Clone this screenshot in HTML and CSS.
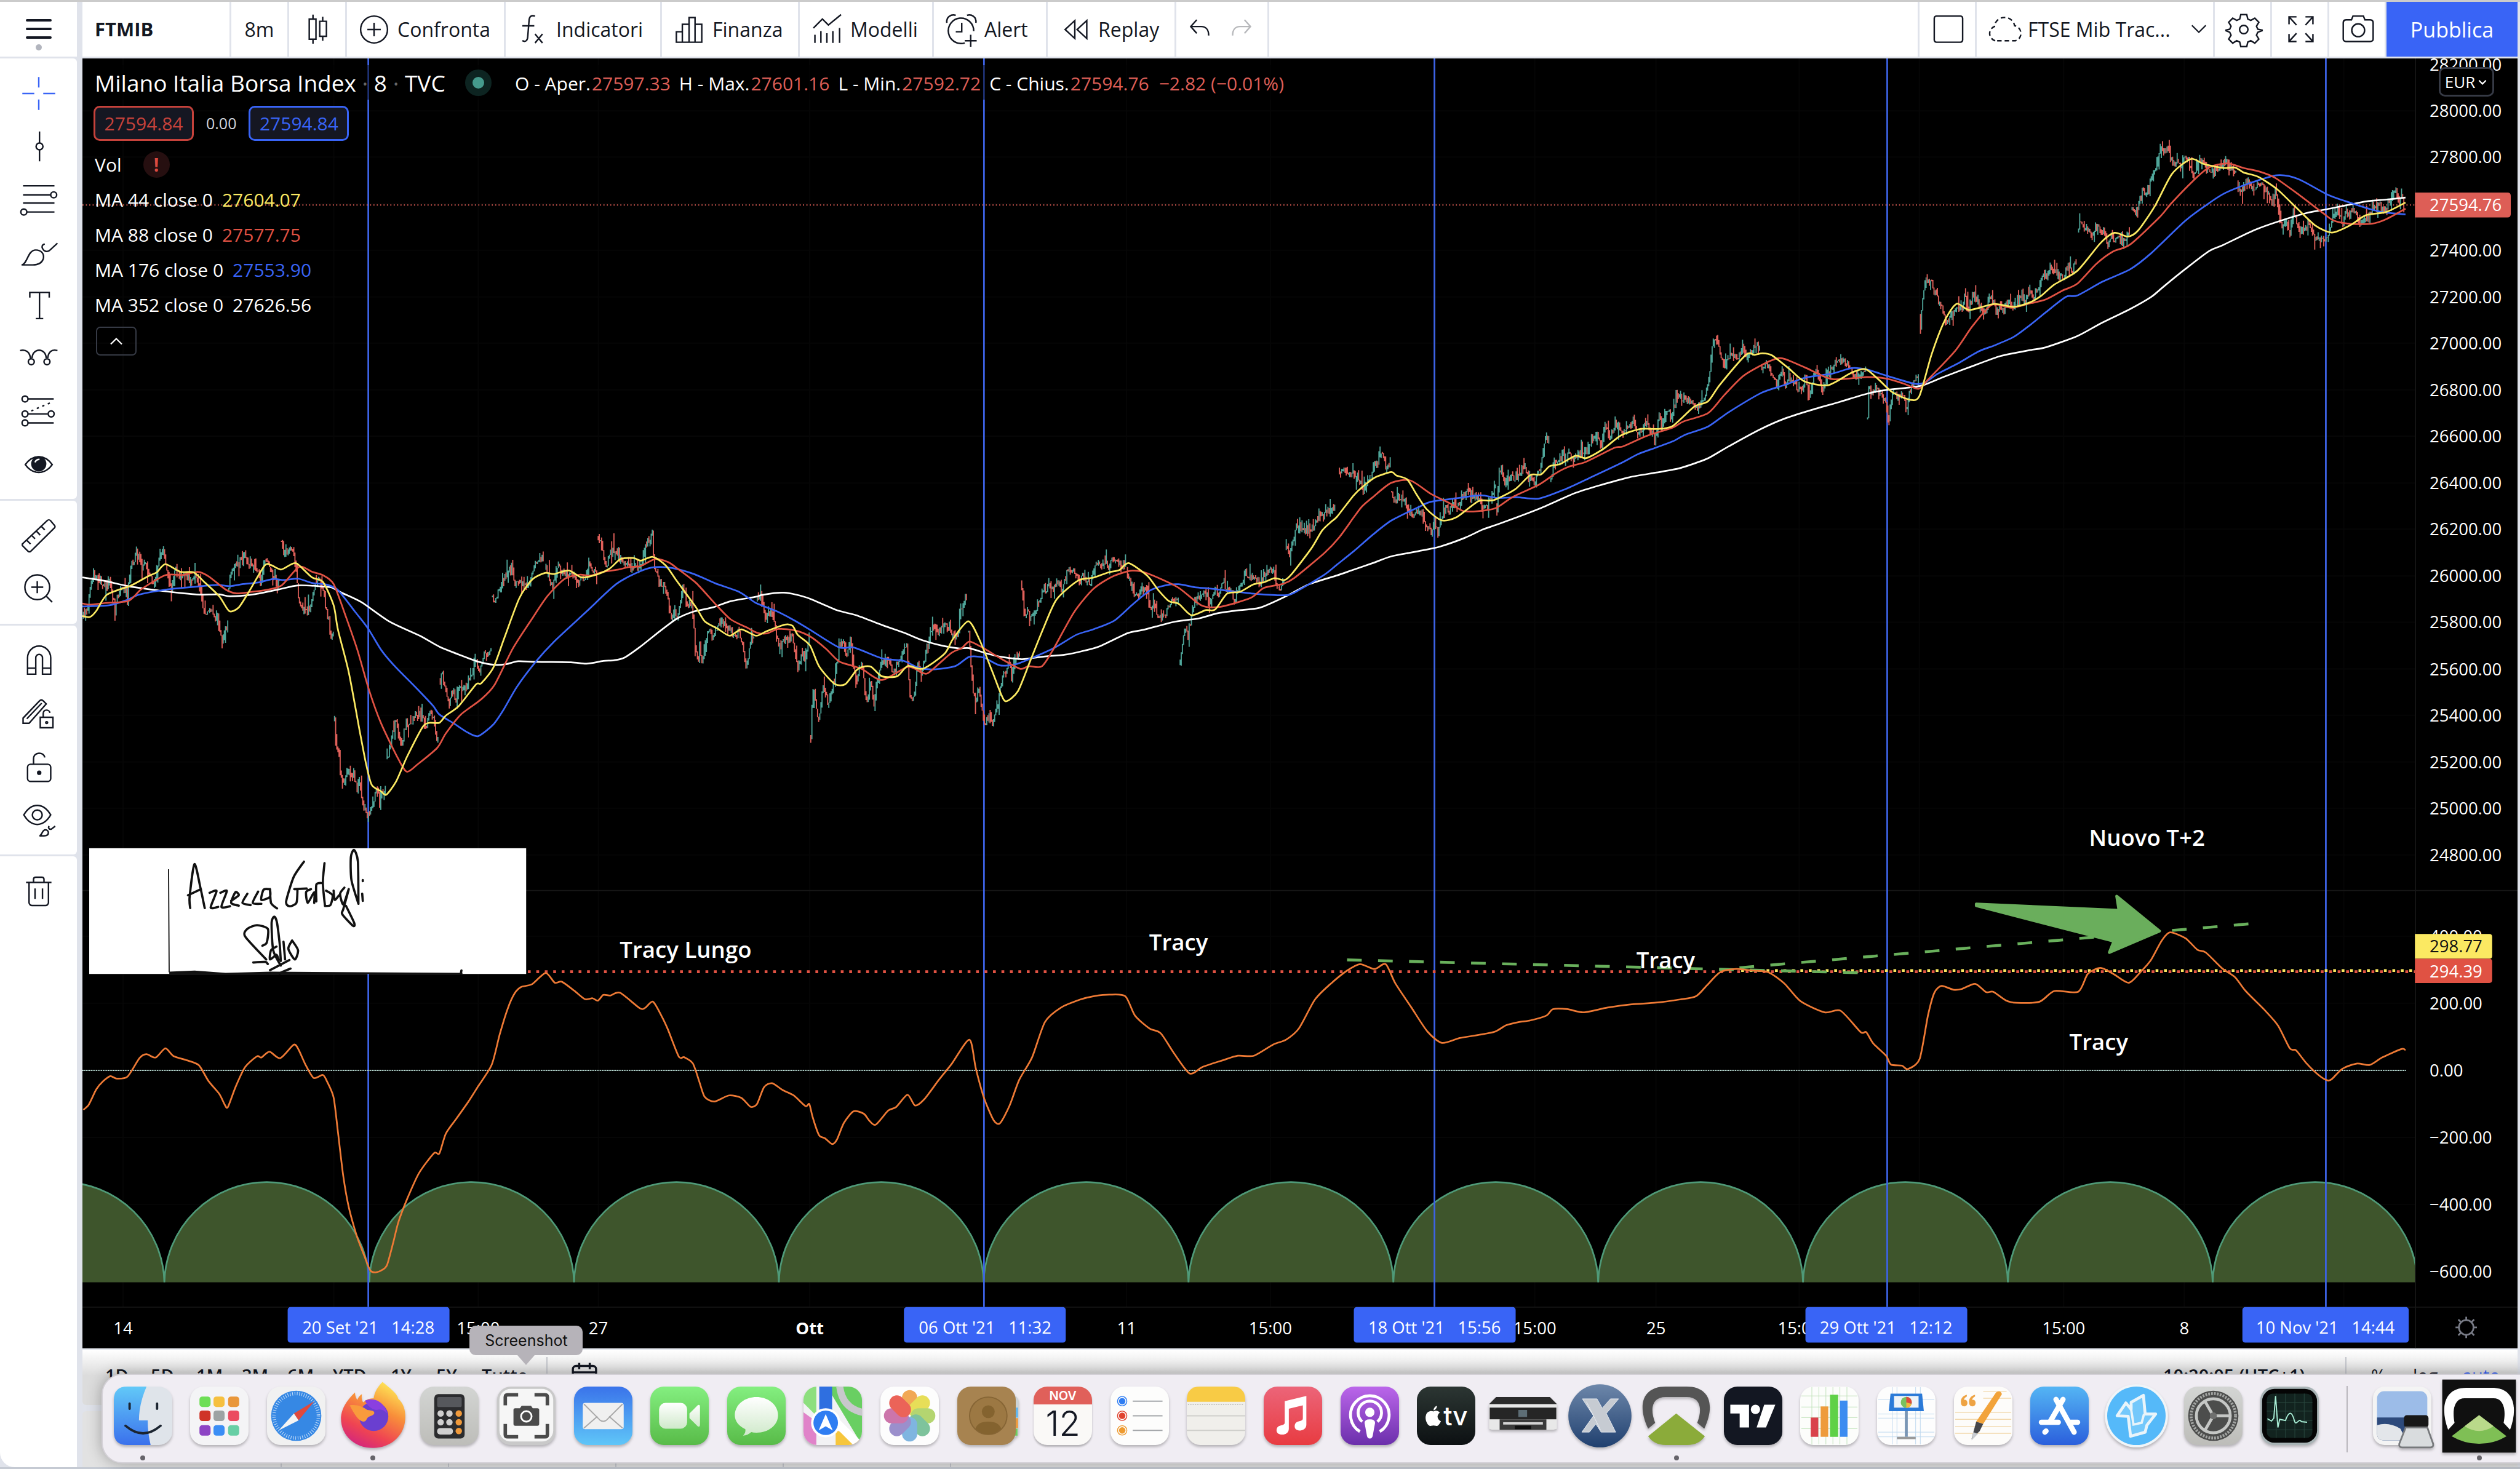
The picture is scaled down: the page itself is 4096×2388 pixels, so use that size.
FILE: index.html
```html
<!DOCTYPE html>
<html lang="it">
<head>
<meta charset="utf-8">
<title>FTMIB</title>
<link rel="stylesheet" href="styles.css">
</head>
<body>
<div class="app">
<header class="topbar">
  <button class="menu" aria-label="Menu"><svg class="menu-icon" viewBox="0 0 48 68"><path d="M5 19h38M5 33h38M5 47h38" stroke="#131722" stroke-width="4" stroke-linecap="round"/><circle cx="24" cy="63" r="5" fill="#b2b5be"/></svg></button>
  <div class="tools">
    <button class="tb w-symbol"><b>FTMIB</b></button>
    <button class="tb w-small">8m</button>
    <button class="tb w-small" aria-label="Candele"><svg class="ico" viewBox="0 0 28 28"><path d="M11 4v3M11 20.500v3M8.500 7h4.500v13.500H8.500zM17.500 5.500v3M17.500 18.500v3M15.500 8.500H20v10h-4.500z"/></svg></button>
    <button class="tb w-confronta"><svg class="ico" viewBox="0 0 28 28"><circle cx="14" cy="14" r="9"/><path d="M14 9.500v9M9.500 14h9"/></svg>Confronta</button>
    <button class="tb w-indicatori"><svg class="ico" viewBox="0 0 28 28"><path d="M15.500 5c-2.500-.8-3.800.2-4 3l-.9 11c-.2 2.500-1.500 3.500-3.600 2.500M7 11.500h8M15.500 17l5 6M20.500 17l-5 6"/></svg>Indicatori</button>
    <button class="tb w-finanza"><svg class="ico" viewBox="0 0 28 28"><path d="M5 22.500h18M5.500 22.500v-7h4v7M9.500 15.500v-5h4.500v12M14 12V6h4v16.500M18 10.500h4.500v12"/></svg>Finanza</button>
    <button class="tb w-modelli"><svg class="ico" viewBox="0 0 28 28"><path d="M5 13l6-6 4 4 8.500-7M6 17.500V23M10 15v8M14 16.500V23M18 15v8M22.500 13v10"/></svg>Modelli</button>
    <button class="tb w-alert"><svg class="ico" viewBox="0 0 28 28"><path d="M22.500 15a8.500 8.500 0 1 0-6 8M14.500 9.500v6h-4M4.500 9.500c-.5-4 3-6 6-5M24 9.500c.5-4-3-6-6-5M20.500 17.500v8M16.500 21.500h8"/></svg>Alert</button>
    <button class="tb w-replay"><svg class="ico" viewBox="0 0 28 28"><path d="M14 8v12l-6.500-6zM22 8v12l-6.500-6z"/></svg>Replay</button>
    <div class="tb w-undo"><button class="plain" aria-label="Annulla"><svg class="ico" viewBox="0 0 28 28"><path d="M12 7.500L8 12l4 4.500M8 12h7c3 0 5 2 5 6"/></svg></button><button class="plain dim" aria-label="Ripeti"><svg class="ico" viewBox="0 0 28 28"><path d="M16 7.500l4 4.500-4 4.500M20 12h-7c-3 0-5 2-5 6"/></svg></button></div>
    <div class="grow"></div>
    <button class="tb w-icon first" aria-label="Layout"><svg class="ico" viewBox="0 0 28 28"><rect x="4.500" y="5" width="19" height="17.500" rx="1.500"/></svg></button>
    <button class="tb w-layout"><svg class="ico" viewBox="0 0 28 28"><path stroke-dasharray="3 2" d="M7 21.500a5 5 0 0 1-.5-9.500C7 4.500 18.500 3.500 20 11.500c5.500 1 5.500 9 .5 10z"/></svg>FTSE Mib Trac...<svg class="chev" viewBox="0 0 16 16"><path d="M3 5l5 5 5-5"/></svg></button>
    <button class="tb w-icon" aria-label="Impostazioni"><svg class="ico" viewBox="0 0 28 28"><path d="M12 4h4l.7 3 2 .9 2.700-1.500 2.700 2.700-1.600 2.700.9 2 2.900.6v.4l-2.900 1-.9 2 1.600 2.600-2.700 2.700-2.700-1.600-2 .9-.7 3h-4l-.7-3-2-.9-2.700 1.600L3.900 20.400l1.600-2.600-.9-2-2.500-1 0-.4 2.500-.6.900-2L3.900 9.100l2.700-2.700 2.700 1.500 2-.9z"/><circle cx="14" cy="14" r="2.800"/></svg></button>
    <button class="tb w-icon" aria-label="Schermo intero"><svg class="ico" viewBox="0 0 28 28"><path d="M6 10.500V5.500h5M6 5.500l5 5.500M22 10.500V5.500h-5M22 5.500L17 11M6 17v5h5M6 22l5-5.500M22 17v5h-5M22 22l-5-5.500"/></svg></button>
    <button class="tb w-icon" aria-label="Istantanea"><svg class="ico" viewBox="0 0 28 28"><path d="M4 9.500C4 8 5 7.500 6 7.500h3.500l1-2.500h7l1 2.500H22c1 0 2 .5 2 2v11c0 1-1 1.500-2 1.500H6c-1 0-2-.5-2-1.500z"/><circle cx="14" cy="14.500" r="4.300"/></svg></button>
    <button class="publish">Pubblica</button>
  </div>
</header>

<nav class="sidebar" aria-label="Strumenti di disegno">
  <div class="group">
    <button class="tool active" aria-label="Mirino"><svg viewBox="0 0 28 28"><path d="M14 3v7M14 18v7M3 14h8M17 14h8"/></svg></button>
    <button class="tool" aria-label="Linea"><svg viewBox="0 0 28 28"><path d="M14.500 4v7.500M14.500 16.500V24"/><circle cx="14.500" cy="14" r="2.300"/></svg></button>
    <button class="tool" aria-label="Fibonacci"><svg viewBox="0 0 28 28"><path d="M3.500 5h21M3.500 11h18.500M3.500 16.500h21M6 22.500h18.500"/><circle cx="24" cy="11" r="2"/><circle cx="4" cy="22.500" r="2"/></svg></button>
    <button class="tool" aria-label="Pennello"><svg viewBox="0 0 28 28"><path d="M2.500 22.500c4-.5 4-10 9.500-10 3.500 0 6 2.500 5 6-1 3-4 4-7 4zM18 8.500c-2 .5-2 2-1.500 3 1 2 3 2.500 4.500 1.500l5.500-5"/></svg></button>
    <button class="tool" aria-label="Testo"><svg viewBox="0 0 28 28"><path d="M8 9V5.500h13V9M14.500 5.500V23M12 23h5"/></svg></button>
    <button class="tool" aria-label="Modelli"><svg viewBox="0 0 28 28"><path d="M1.500 9c4-1 6.500 1 7 5.500M9.500 14C10 7 18.500 7 19 14M20 14c.5-4.500 3-6 6.500-5"/><circle cx="9" cy="16.500" r="2"/><circle cx="19.500" cy="16.500" r="2"/></svg></button>
    <button class="tool" aria-label="Previsione"><svg viewBox="0 0 28 28"><path d="M7 6h17M7 16h13M7 22h17"/><path stroke-dasharray="1.500 2.500" d="M9 14L23 8"/><circle cx="4.800" cy="6" r="2"/><circle cx="4.800" cy="16" r="2"/><circle cx="4.800" cy="22" r="2"/><circle cx="22.300" cy="16" r="2"/></svg></button>
    <button class="tool" aria-label="Icone"><svg viewBox="0 0 28 28"><path d="M5 14.500c5-7 13-7 18 0-5 7-13 7-18 0z"/><circle cx="14" cy="14" r="4.600" fill="#131722"/><path d="M11.500 13c.5-1.500 1.500-2 3-2" stroke="#fff"/></svg></button>
  </div>
  <div class="group">
    <button class="tool" aria-label="Misura"><svg viewBox="0 0 28 28"><path d="M3 19.500L19.500 4c1-1 1.500-1 2.500 0l2.500 3c.6.7.6 1 0 1.700L9 24c-1 1-1.500 1-2.500 0L3 20.500zM6 17l2.500 2.500M9.500 14l2 2M12.500 11l2.500 2.500M16 8l2 2"/></svg></button>
    <button class="tool" aria-label="Zoom"><svg viewBox="0 0 28 28"><circle cx="13" cy="13" r="8.300"/><path d="M13 9v8M9 13h8M19 19l4 4"/></svg></button>
  </div>
  <div class="group">
    <button class="tool" aria-label="Calamita"><svg viewBox="0 0 28 28"><path d="M6.500 23V12a7.500 7.500 0 0 1 15.500 0v11h-5.500V12a2.200 2.200 0 0 0-4.500 0v11zM6.500 19H12M16.500 19H22"/></svg></button>
    <button class="tool" aria-label="Blocca disegno"><svg viewBox="0 0 28 28"><path d="M3.500 20.500v-3.500L14.500 5.500c1-1 2-.5 2.500 0L19 7.500 7.500 20.500zM6 17.500L16 7M15 16.500h8.500v7H15zM17 16.500V14c0-3 4-3 4.500-.5"/><circle cx="19.300" cy="20" r=".6"/></svg></button>
    <button class="tool" aria-label="Blocca"><svg viewBox="0 0 28 28"><rect x="6.500" y="12.500" width="15.500" height="11.500" rx="2"/><path d="M10.500 12.500V9c0-5 7-5 7.500-1"/><circle cx="14.300" cy="18.200" r="1" fill="#131722"/></svg></button>
    <button class="tool" aria-label="Nascondi"><svg viewBox="0 0 28 28"><path d="M4 11c5-8.500 13-8.500 18 0-5 8.500-13 8.500-18 0zM14.500 25c2-.5 1.500-4 4-4s3 4-1 4zM21 18.500c-1 1 0 2.500 1.500 2l2.500-2"/><circle cx="13" cy="11" r="3.300"/></svg></button>
  </div>
  <div class="group rest">
    <button class="tool" aria-label="Elimina"><svg viewBox="0 0 28 28"><path d="M5.500 8h17M7.500 8v13.500c0 1 1 2 2 2h9c1 0 2-1 2-2V8M10.500 8V6c0-1 .5-1.500 1.500-1.500h4c1 0 1.500.5 1.500 1.500v2M11.500 12v7M16.500 12v7"/></svg></button>
  </div>
</nav>

<main class="main">
<section class="chart">
<svg class="plot" viewBox="146 104 4319 2288" role="img" aria-label="Grafico FTMIB">
  <defs><clipPath id="pane"><rect x="146" y="104" width="4137" height="2215"/></clipPath></defs>
  <rect x="146" y="104" width="4319" height="2288" fill="#000"/>
  <path class="grid" d="M146 197H4283M146 279H4283M146 362H4283M146 444H4283M146 527H4283M146 609H4283M146 692H4283M146 774H4283M146 857H4283M146 939H4283M146 1022H4283M146 1104H4283M146 1187H4283M146 1269H4283M146 1352H4283M146 1434H4283M146 1517H4283M146 1661H4283M146 1780H4283M146 2018H4283M146 2137H4283M146 2256H4283M218 104V2319M592 104V2319M848 104V2319M1061 104V2319M1436 104V2319M1998 104V2319M2253 104V2319M2722 104V2319M2937 104V2319M3191 104V2319M3404 104V2319M3660 104V2319M3874 104V2319M4157 104V2319"/>
  <path class="frame" d="M146 1580H4465M4284 104V2392M146 2319H4465"/>
  <g clip-path="url(#pane)">
    <g id="cycles" class="cycles"></g>
    <path class="marks" d="M653 104V2319M1745 104V2319M2544 104V2319M3347 104V2319M4125 104V2319"/>
    <path class="last-price" d="M146 364H4283"/>
    <path class="zero" d="M146 1899H4267"/>
    <g id="prices"></g>
    <path class="dots red" d="M936 1724H4283"/>
    <path class="dots yellow" d="M3088 1722H4283"/>
    <path class="trend" d="M2389 1703L3300 1726M3085 1717L3990 1639"/>
    <g id="osc"></g>
    <path class="arrow" d="M3505 1604L3758 1615 3754 1590 3830 1652 3741 1690 3749 1670 3505 1607z"/>
    <g class="notes">
      <text x="3705" y="1501">Nuovo T+2</text>
      <text x="3670" y="1863">Tracy</text>
      <text x="1099" y="1699">Tracy Lungo</text>
      <text x="2038" y="1686">Tracy</text>
      <text x="2902" y="1718">Tracy</text>
    </g>
    <rect x="158" y="1505" width="775" height="223" fill="#fff"/>
    <path fill="#111" d="M300 1724l45-2 55 4 80-2 340 2 0-4v6H300z"/>
    <g id="ink"></g>
  </g>
  <g class="axis" transform="translate(4309 11)">
    <text y="115">28200.00</text><text y="197">28000.00</text><text y="279">27800.00</text><text y="444">27400.00</text><text y="527">27200.00</text><text y="609">27000.00</text><text y="692">26800.00</text><text y="774">26600.00</text><text y="857">26400.00</text><text y="939">26200.00</text><text y="1022">26000.00</text><text y="1104">25800.00</text><text y="1187">25600.00</text><text y="1269">25400.00</text><text y="1352">25200.00</text><text y="1434">25000.00</text><text y="1517">24800.00</text>
    <text y="1661">400.00</text><text y="1780">200.00</text><text y="1899">0.00</text><text y="2018">−200.00</text><text y="2137">−400.00</text><text y="2256">−600.00</text>
  </g>
  <path fill="#dd5e56" d="M4283 342h164q6 0 6 6v32q0 6-6 6h-164z"/>
  <path fill="#fbe962" d="M4283 1657h132q5 0 5 5v34q0 5-5 5h-132z"/>
  <path fill="#e05243" d="M4283 1701h132q5 0 5 5v33q0 5-5 5h-132z"/>
  <g class="axis" transform="translate(4309 11)"><text y="364">27594.76</text><text class="dark" y="1679">298.77</text><text y="1723">294.39</text></g>
  <g class="axis mid">
    <text x="218" y="2367">14</text><text x="848" y="2367">15:00</text><text x="1061" y="2367">27</text><text class="bold" x="1436" y="2367">Ott</text><text x="1998" y="2367">11</text><text x="2253" y="2367">15:00</text><text x="2722" y="2367">15:00</text><text x="2937" y="2367">25</text><text x="3191" y="2367">15:00</text><text x="3660" y="2367">15:00</text><text x="3874" y="2367">8</text>
    <g fill="#3964f6"><rect x="510" y="2319" width="287" height="63" rx="5"/><rect x="1603" y="2319" width="287" height="63" rx="5"/><rect x="2401" y="2319" width="287" height="63" rx="5"/><rect x="3202" y="2319" width="287" height="63" rx="5"/><rect x="3977" y="2319" width="295" height="63" rx="5"/></g>
    <text x="653" y="2366">20 Set '21 &#160; 14:28</text><text x="1747" y="2366">06 Ott '21 &#160; 11:32</text><text x="2544" y="2366">18 Ott '21 &#160; 15:56</text><text x="3345" y="2366">29 Ott '21 &#160; 12:12</text><text x="4124" y="2366">10 Nov '21 &#160; 14:44</text>
  </g>
  <g transform="translate(4374 2355)" fill="none" stroke="#787b86" stroke-width="3"><circle r="13"/><path d="M0-13v-6M0 13v6M13 0h6M-13 0h-6M9-9l5-5M-9-9l-5-5M9 9l5 5M-9 9l-5 5"/></g>
</svg>

<div class="legend">
  <div class="title-row"><span class="title">Milano Italia Borsa Index <i>·</i> 8 <i>·</i> TVC</span><span class="status"></span>
    <div class="ohlc"><span>O - Aper.<em>27597.33</em></span><span>H - Max.<em>27601.16</em></span><span>L - Min.<em>27592.72</em></span><span>C - Chius.<em>27594.76</em></span><em>−2.82 (−0.01%)</em></div></div>
  <div class="quote-row"><button class="quote sell">27594.84</button><span class="spread">0.00</span><button class="quote buy">27594.84</button></div>
  <div class="row">Vol<span class="warn">!</span></div>
  <div class="row">MA 44 close 0<span class="y">27604.07</span></div>
  <div class="row">MA 88 close 0<span class="r">27577.75</span></div>
  <div class="row">MA 176 close 0<span class="b">27553.90</span></div>
  <div class="row">MA 352 close 0<span>27626.56</span></div>
  <button class="collapse" aria-label="Comprimi"><svg class="chev" viewBox="0 0 16 16"><path d="M4 10l4-4 4 4"/></svg></button>
</div>
<button class="currency">EUR<svg viewBox="0 0 16 16"><path d="M3 6l5 5 5-5"/></svg></button>
</section>

<section class="ranges">
  <button>1D</button><button>5D</button><button>1M</button><button>3M</button><button>6M</button><button class="wide">YTD</button><button>1Y</button><button>5Y</button><button class="all">Tutto</button>
  <button class="goto" aria-label="Vai alla data"><svg viewBox="0 0 28 28"><rect x="3" y="5" width="22" height="19" rx="3"/><path d="M3 11h22M9 2v6M19 2v6"/></svg></button>
  <div class="grow"></div>
  <button class="clock">10:20:05 (UTC+1)</button><button class="pct">%</button><button class="log">log</button><button class="auto">auto</button>
</section>
<section class="tabs"><span></span><span></span><span></span><span></span><span></span></section>
</main>
</div>

<div class="dock">
  <div class="apps">
    <a href="#" class="app-icon running" aria-label="Finder"><svg viewBox="0 0 100 100"><defs><linearGradient id="fb" x2="0" y2="1"><stop stop-color="#62c9f8"/><stop offset="1" stop-color="#3a70ec"/></linearGradient><linearGradient id="green" x2="0" y2="1"><stop stop-color="#84ef80"/><stop offset="1" stop-color="#58bb48"/></linearGradient><linearGradient id="grey" x2="0" y2="1"><stop stop-color="#d3d5d3"/><stop offset="1" stop-color="#bdbdb9"/></linearGradient><linearGradient id="white" x2="0" y2="1"><stop stop-color="#ffffff"/><stop offset="1" stop-color="#cfe9ca"/></linearGradient></defs><rect width="100" height="100" rx="23" fill="#dfe4ea"/><path d="M23 0h33q-13 30-13 58h15q0 22 5 42H23Q0 100 0 77V23Q0 0 23 0z" fill="url(#fb)"/><path d="M27 29v9M74 29v9M20 67q30 26 60 0" fill="none" stroke="#1b2430" stroke-width="4" stroke-linecap="round"/></svg></a>
    <a href="#" class="app-icon" aria-label="Launchpad"><svg viewBox="0 0 100 100"><rect width="100" height="100" rx="23" fill="#f4f4f6"/><g><rect x="16" y="17" width="19" height="18" rx="5" fill="#6ede56"/><rect x="40" y="17" width="19" height="18" rx="5" fill="#f6c03f"/><rect x="65" y="17" width="19" height="18" rx="5" fill="#e9973a"/><rect x="16" y="41" width="19" height="18" rx="5" fill="#cf3427"/><rect x="40" y="41" width="19" height="18" rx="5" fill="#9da3a4"/><rect x="65" y="41" width="19" height="18" rx="5" fill="#eb4b60"/><rect x="16" y="66" width="19" height="18" rx="5" fill="#8d44c4"/><rect x="40" y="66" width="19" height="18" rx="5" fill="#3b8ef5"/><rect x="65" y="66" width="19" height="18" rx="5" fill="#67cfa5"/></g></svg></a>
    <a href="#" class="app-icon" aria-label="Safari"><svg viewBox="0 0 100 100"><rect width="100" height="100" rx="23" fill="#f1f1f1"/><circle cx="50" cy="50" r="43" fill="#3688e4"/><circle cx="50" cy="50" r="38" fill="none" stroke="#cfe4fa" stroke-width="6" stroke-dasharray="1 3"/><path d="M81 25L54 58 46 46z" fill="#e1493c"/><path d="M20 75l26-29 8 12z" fill="#f4f4f4"/></svg></a>
    <a href="#" class="app-icon running" aria-label="Firefox"><svg viewBox="0 0 100 100"><defs><linearGradient id="ff" x1=".8" y1="0" x2=".3" y2="1"><stop stop-color="#fff05a"/><stop offset=".4" stop-color="#f88f3a"/><stop offset=".75" stop-color="#ef4452"/><stop offset="1" stop-color="#d3267d"/></linearGradient></defs><path d="M66-8c-8 8-14 18-15 28-10 0-14 4-18 7-3-4-3-9-2-14-5 3-7 7-8 10-2-3-4-7-4-13C9 20-3 33-5 52c-1 32 24 53 55 53s56-22 55-55c0-12-5-24-12-29-2-10-14-18-27-29z" fill="url(#ff)"/><circle cx="51" cy="51" r="25" fill="#6a3fd0"/><path d="M10 32c12-2 22 2 30 8 6 1 12 1 12 5s-6 5-10 7c-4 3-3 7-8 8-8 0-16-12-24-28z" fill="#f99b3c"/><path d="M36 24c14-6 32 0 38 22-6-6-10-8-18-6-6 0-16-6-20-16z" fill="#8a3fe0"/></svg></a>
    <a href="#" class="app-icon" aria-label="Calcolatrice"><svg viewBox="0 0 100 100"><rect width="100" height="100" rx="23" fill="url(#grey)"/><rect x="24" y="13" width="52" height="76" rx="7" fill="#2b2c2e"/><rect x="29" y="18" width="42" height="17" rx="3" fill="#56585c"/><g fill="#cfcfcf"><circle cx="35" cy="46" r="5.500"/><circle cx="50" cy="46" r="5.500"/><circle cx="35" cy="61" r="5.500"/><circle cx="50" cy="61" r="5.500"/><rect x="29" y="71" width="27" height="11" rx="5"/></g><g fill="#f09a3b"><circle cx="66" cy="46" r="5.500"/><circle cx="66" cy="61" r="5.500"/><circle cx="66" cy="76" r="5.500"/></g></svg></a>
    <a href="#" class="app-icon" aria-label="Screenshot"><span class="tip">Screenshot</span><svg viewBox="0 0 100 100"><rect width="100" height="100" rx="23" fill="#c9c9c9"/><rect x="4" y="4" width="92" height="90" rx="19" fill="#f6f6f6"/><path d="M14 32V18q0-4 4-4h18M64 14h18q4 0 4 4v14M14 64v18q0 4 4 4h18M64 86h18q4 0 4-4V64" fill="none" stroke="#4a4a4a" stroke-width="6"/><path d="M28 40q0-3 3-3h8l3-4h16l3 4h8q3 0 3 3v24q0 3-3 3H31q-3 0-3-3z" fill="#4a4a4a"/><circle cx="50" cy="51" r="9" fill="#4a4a4a" stroke="#fff" stroke-width="3"/></svg></a>
    <a href="#" class="app-icon" aria-label="Mail"><svg viewBox="0 0 100 100"><defs><linearGradient id="ml" x2="0" y2="1"><stop stop-color="#3a73ea"/><stop offset="1" stop-color="#5fc6f8"/></linearGradient></defs><rect width="100" height="100" rx="23" fill="url(#ml)"/><rect x="15" y="28" width="70" height="45" rx="4" fill="#f0f0f0"/><path d="M17 30l27 27q6 5 12 0l27-27M17 71l23-20M83 71L60 51" fill="none" stroke="#a8a8a8" stroke-width="2"/></svg></a>
    <a href="#" class="app-icon" aria-label="FaceTime"><svg viewBox="0 0 100 100"><rect width="100" height="100" rx="23" fill="url(#green)"/><rect x="15" y="28" width="48" height="44" rx="11" fill="url(#white)"/><path d="M67 46l14-14q4-2 4 3v30q0 5-4 3L67 54z" fill="url(#white)"/></svg></a>
    <a href="#" class="app-icon" aria-label="Messaggi"><svg viewBox="0 0 100 100"><rect width="100" height="100" rx="23" fill="url(#green)"/><path d="M50 18c21 0 37 14 37 31S71 79 50 79q-5 0-9-1-6 6-14 6 5-5 4-11C20 68 13 59 13 49c0-17 16-31 37-31z" fill="url(#white)"/></svg></a>
    <a href="#" class="app-icon" aria-label="Mappe"><svg viewBox="0 0 100 100"><defs><clipPath id="mp"><rect width="100" height="100" rx="23"/></clipPath></defs><g clip-path="url(#mp)"><rect width="100" height="100" fill="#f2f2f4"/><path d="M40 0h60v100z" fill="#69cf62"/><path d="M0 0h22v50L0 28z" fill="#8ddf7e"/><path d="M0 44l22 16v40H0z" fill="#e083c9"/><path d="M55 74l45 20v6H55z" fill="#f6c63d"/><path d="M62 0q5 40 45 45" fill="none" stroke="#c8c8cc" stroke-width="12"/><path d="M27 0h22v50H27z" fill="#2f6fe0"/><path d="M45 50l60 60" stroke="#fff" stroke-width="14"/></g><circle cx="38" cy="62" r="25" fill="#fff"/><circle cx="38" cy="62" r="21" fill="#2f7df2"/><path d="M38 47l12 28-12-7-12 7z" fill="#fff"/></svg></a>
    <a href="#" class="app-icon" aria-label="Foto"><svg viewBox="0 0 100 100"><rect width="100" height="100" rx="23" fill="#fdfdfd"/><g opacity=".85"><rect x="37" y="6" width="26" height="42" rx="13" fill="#f09a38"/><rect x="37" y="6" width="26" height="42" rx="13" fill="#e4d93c" transform="rotate(45 50 50)"/><rect x="37" y="6" width="26" height="42" rx="13" fill="#a8cf58" transform="rotate(90 50 50)"/><rect x="37" y="6" width="26" height="42" rx="13" fill="#68b98c" transform="rotate(135 50 50)"/><rect x="37" y="6" width="26" height="42" rx="13" fill="#6aa9dc" transform="rotate(180 50 50)"/><rect x="37" y="6" width="26" height="42" rx="13" fill="#8a7cc4" transform="rotate(225 50 50)"/><rect x="37" y="6" width="26" height="42" rx="13" fill="#c45e9d" transform="rotate(270 50 50)"/><rect x="37" y="6" width="26" height="42" rx="13" fill="#e8493c" transform="rotate(315 50 50)"/></g></svg></a>
    <a href="#" class="app-icon" aria-label="Contatti"><svg viewBox="0 0 100 100"><rect x="12" y="14" width="93" height="74" rx="12" fill="#cdd3d6"/><path d="M98 36h6v17h-6z" fill="#62b6ee"/><path d="M98 54h6v17h-6z" fill="#ee9a3d"/><path d="M98 72h5v12h-5z" fill="#6fcd60"/><rect width="100" height="100" rx="23" fill="#a78350"/><circle cx="53" cy="50" r="32" fill="#9c7843" stroke="#866535" stroke-width="2"/><circle cx="53" cy="43" r="11" fill="#84632f"/><path d="M31 72q4-12 22-12t22 12q-22 20-44 0z" fill="#84632f"/></svg></a>
    <a href="#" class="app-icon" aria-label="Calendario"><span class="cal"><span class="cal-m">NOV</span><span class="cal-d">12</span></span></a>
    <a href="#" class="app-icon" aria-label="Promemoria"><svg viewBox="0 0 100 100"><rect width="100" height="100" rx="23" fill="#fdfdfc"/><path d="M38 25h51M38 50h51M38 75h51" stroke="#a4a7aa" stroke-width="2"/><circle cx="20" cy="25" r="5.500" fill="#2f7df2"/><circle cx="20" cy="50" r="5.500" fill="#e0432f"/><circle cx="20" cy="75" r="5.500" fill="#ee9a2f"/><g fill="none" stroke-width="1.500"><circle cx="20" cy="25" r="8" stroke="#2f7df2"/><circle cx="20" cy="50" r="8" stroke="#e0432f"/><circle cx="20" cy="75" r="8" stroke="#ee9a2f"/></g></svg></a>
    <a href="#" class="app-icon" aria-label="Note"><svg viewBox="0 0 100 100"><rect width="100" height="100" rx="23" fill="#f0efeb"/><path d="M23 0h54q23 0 23 23v3H0v-3Q0 0 23 0z" fill="#f8cb45"/><path d="M2 31h96" stroke="#aaa9a4" stroke-dasharray="2 2"/><path d="M0 50h100M0 75h100" stroke="#cfcfcb" stroke-width="2"/></svg></a>
    <a href="#" class="app-icon" aria-label="Musica"><svg viewBox="0 0 100 100"><defs><linearGradient id="mu" x2="0" y2="1"><stop stop-color="#ec6579"/><stop offset="1" stop-color="#e83b41"/></linearGradient></defs><rect width="100" height="100" rx="23" fill="url(#mu)"/><path d="M36 25l37-9v49c0 6-4 9-9 10-7 1-11-2-11-7 0-6 4-8 9-9 4-1 5-2 5-5V32l-24 6v34c0 6-4 9-9 10-7 1-12-2-12-7 0-6 4-8 9-9 4-1 5-2 5-5z" fill="#fff"/></svg></a>
    <a href="#" class="app-icon" aria-label="Podcast"><svg viewBox="0 0 100 100"><defs><linearGradient id="po" x2="0" y2="1"><stop stop-color="#bb66ea"/><stop offset="1" stop-color="#6b2fab"/></linearGradient></defs><rect width="100" height="100" rx="23" fill="url(#po)"/><g fill="none" stroke="#fff" stroke-width="5"><path d="M33 77a33 33 0 1 1 34 0M37 60a20 20 0 1 1 26 0"/></g><circle cx="50" cy="44" r="8" fill="#fff"/><path d="M41 62q0-6 9-6t9 6l-4 22q-1 5-5 5t-5-5z" fill="#fff"/></svg></a>
    <a href="#" class="app-icon" aria-label="TV"><span class="tv"><svg viewBox="0 0 30 36"><path d="M15 10c3-2 8-2 11 2-6 4-5 12 2 15-3 6-6 9-9 8-3-1-5-1-8 0C5 37-1 24 2 16c2-6 8-8 13-6zM15 8c0-4 3-7 6-8 0 4-2 7-6 8z" fill="#fff"/></svg>tv</span></a>
    <a href="#" class="app-icon" aria-label="Stampante"><svg viewBox="0 0 100 100"><path d="M-8 30L4 18h92l12 12v42l-6 2H-3l-5-2z" fill="#e8e8e8"/><path d="M4 18h92l12 12H-8z" fill="#2b2b2b"/><rect x="-7" y="36" width="114" height="20" fill="#252525"/><rect x="42" y="40" width="15" height="12" fill="#5d6d75"/><rect x="10" y="56" width="80" height="18" fill="#3a3a3a"/><rect x="16" y="61" width="68" height="4" fill="#d4d4d4"/><rect x="36" y="67" width="28" height="6" fill="#111"/></svg></a>
    <a href="#" class="app-icon" aria-label="X"><svg viewBox="0 0 100 100"><defs><linearGradient id="xx" x2="0" y2="1"><stop stop-color="#6d87aa"/><stop offset="1" stop-color="#20406f"/></linearGradient></defs><circle cx="50" cy="50" r="54" fill="url(#xx)"/><path d="M20 21h25l9 16 14-16h14L61 46l16 32H52l-9-14-11 14H19l20-28zM27 26l24 48" fill="#c6cbd2" stroke="#e9edf2"/></svg></a>
    <a href="#" class="app-icon running" aria-label="Borsa"><svg viewBox="0 0 100 100"><path d="M2 72C-18 30-6 0 32 0h36c38 0 50 30 30 72L86 62c10-26 4-44-18-44H32C10 18 4 36 14 62z" fill="#555"/><path d="M50 46l49 39q-10 15-30 15H32Q12 100 2 85z" fill="#8bab3a"/></svg></a>
    <a href="#" class="app-icon" aria-label="TradingView"><svg viewBox="0 0 100 100"><rect width="100" height="100" rx="23" fill="#131722"/><path d="M11 31h32v39H27V46H11zM69 31h19L72 70H56z" fill="#fff"/><circle cx="54" cy="39" r="8" fill="#fff"/></svg></a>
    <a href="#" class="app-icon" aria-label="Numbers"><svg viewBox="0 0 100 100"><rect width="100" height="100" rx="23" fill="#fcfdfb"/><path d="M2 16h96M2 35h96M2 53h96M2 72h96M20 1v98M32 1v98M44 1v98M56 1v98M68 1v98M80 1v98" stroke="#bfe2b8"/><path d="M18 53h13v33H18z" fill="#d9434b"/><path d="M35 34h13v52H35z" fill="#ee9b3b"/><path d="M51 14h14v72H51z" fill="#5fd147"/><path d="M68 24h13v62H68z" fill="#3b8cf0"/></svg></a>
    <a href="#" class="app-icon" aria-label="Keynote"><svg viewBox="0 0 100 100"><rect width="100" height="100" rx="23" fill="#fdfdfd"/><path d="M2 22h96M2 47h96M2 54h96M2 78h96M2 86h96M26 1v98M34 1v98M66 1v98M74 1v98" stroke="#bdd7ee"/><path d="M23 12h54l3 30H20z" fill="#2b7ad8"/><path d="M29 16h42v20H29z" fill="#eef3f8"/><circle cx="50" cy="27" r="9.500" fill="#7ac15f"/><path d="M50 27V17.500a9.500 9.500 0 0 1 9 12z" fill="#e1493c"/><path d="M50 27l9 3a9.500 9.500 0 0 1-9 6.500z" fill="#f5b63c"/><path d="M50 42v44" stroke="#7a96b5" stroke-width="5"/><path d="M34 86h32v4H34z" fill="#9a9a9a"/></svg></a>
    <a href="#" class="app-icon" aria-label="Pages"><svg viewBox="0 0 100 100"><rect width="100" height="100" rx="23" fill="#fdfcfa"/><path d="M2 44h96M2 56h96M2 68h96M2 80h96M50 20h48M50 8h40" stroke="#f2d8ac" stroke-width="1.500"/><path d="M22 14c-8 2-11 8-10 14 0 8 11 8 11 0 0-4-3-6-6-5 1-4 3-5 5-6zM36 14c-8 2-11 8-10 14 0 8 11 8 11 0 0-4-3-6-6-5 1-4 3-5 5-6z" fill="#eea343"/><path d="M72 10q8-4 10 3L50 64l-12-4z" fill="#f2a33a"/><path d="M38 60l12 4-6 12-14 14z" fill="#45464a"/><path d="M33 78l8 3-11 11z" fill="#c9ccd0"/></svg></a>
    <a href="#" class="app-icon" aria-label="App Store"><svg viewBox="0 0 100 100"><defs><linearGradient id="as" x2="0" y2="1"><stop stop-color="#54b5f4"/><stop offset="1" stop-color="#2b5fdc"/></linearGradient></defs><rect width="100" height="100" rx="23" fill="url(#as)"/><path d="M56 22L34 60M44 22l31 56M27 76l-2 2M19 61h29M68 61h13" stroke="#fff" stroke-width="9" stroke-linecap="round"/></svg></a>
    <a href="#" class="app-icon" aria-label="Aggiornamento"><svg viewBox="0 0 100 100"><circle cx="50" cy="50" r="54" fill="#f0f5f8"/><circle cx="50" cy="50" r="50" fill="#55b9f9"/><path d="M17 50l15-22 9 11V27l21-12 3 32h18L68 66l-3 12-25 7-4-34z" fill="#74c8fb" stroke="#e9f4fa" stroke-width="5" stroke-linejoin="round"/><path d="M41 39l4 26 14-3 4-15" fill="none" stroke="#e9f4fa" stroke-width="4"/></svg></a>
    <a href="#" class="app-icon" aria-label="Preferenze"><svg viewBox="0 0 100 100"><rect width="100" height="100" rx="23" fill="url(#grey)"/><circle cx="50" cy="50" r="43" fill="#4c4d4c"/><circle cx="50" cy="50" r="38" fill="none" stroke="#a3a5a3" stroke-width="5" stroke-dasharray="3 2"/><circle cx="50" cy="50" r="29" fill="none" stroke="#c5c7c5" stroke-width="5"/><path d="M50 50h30M50 50L35 24M50 50L35 76" stroke="#c5c7c5" stroke-width="5"/><circle cx="50" cy="50" r="6" fill="#6f706f"/></svg></a>
    <a href="#" class="app-icon" aria-label="Monitoraggio attività"><svg viewBox="0 0 100 100"><rect width="100" height="100" rx="23" fill="#a9b4b6"/><rect x="3" y="4" width="94" height="92" rx="21" fill="#050505"/><rect x="11" y="12" width="78" height="76" rx="10" fill="#12231f"/><path d="M11 27h78M11 42h78M11 58h78M11 74h78M27 12v76M43 12v76M59 12v76M75 12v76" stroke="#29483f"/><path d="M12 55l7 4 4-5 3-38 4 54 3-14 10 2c7-20 12-12 15 0s8-6 12 2l10 1" fill="none" stroke="#a9efd6" stroke-width="2"/></svg></a>
  </div>
  <div class="divider"></div>
  <div class="recent">
    <a href="#" class="app-icon" aria-label="Anteprima"><svg viewBox="0 0 100 100"><rect width="100" height="100" rx="20" fill="#f4f4f4"/><rect x="7" y="8" width="86" height="84" rx="12" fill="#9cbce8"/><path d="M7 53h86v27q0 12-12 12H19Q7 92 7 80z" fill="#2d4a7c"/><path d="M7 66q20-6 40 6l10 20H19Q7 92 7 80z" fill="#e3e6ea"/><rect x="53" y="49" width="42" height="21" rx="5" fill="#181818"/><path d="M56 70h37l10 28q1 6-5 6H50q-6 0-5-6z" fill="#d9dcde" stroke="#77797c" stroke-width="3"/></svg></a>
    <a href="#" class="app-icon running" aria-label="Borsa"><svg viewBox="0 0 100 100"><rect x="-13" y="-12" width="126" height="125" fill="#101010"/><path d="M-3 74C-17 36-10 2 28 2h44c38 0 45 34 31 72L92 62c5-26-2-42-17-42H25C10 20 3 36 8 62z" fill="#fff"/><path d="M50 49l47 36Q75 98 50 98T3 85z" fill="#7fbf55"/><path d="M50 49l25 19Q50 84 25 68z" fill="#b9d98a"/></svg></a>
  </div>
</div>
<script src="chart.js"></script>
</body>
</html>
```
FILE: styles.css
```css
* { box-sizing: border-box; }
html, body { height: 100%; }
body {
  margin: 0;
  overflow: hidden;
  position: relative;
  background: #e0e3eb;
  color: #131722;
  font: 32px/1 "Open Sans", "Noto Sans", sans-serif;
}
button {
  font: inherit;
  color: inherit;
  background: none;
  border: 0;
  padding: 0;
  margin: 0;
}
svg { display: block; flex: none; }
.grow { flex: 1; }

.app {
  display: grid;
  grid-template-columns: 134px 1fr;
  grid-template-rows: 95px 1fr;
  height: 100%;
  border-bottom: 3px solid #c5cad3;
}

/* top toolbar */
.topbar {
  grid-column: 1 / 3;
  display: flex;
  background: #e0e3eb;
  border-top: 3px solid #cbcbcb;
  border-bottom: 3px solid #e0e3eb;
}
.menu {
  width: 125px;
  margin-right: 9px;
  background: #fff;
  display: flex;
  justify-content: center;
  align-items: center;
}
.menu-icon { width: 48px; height: 68px; }
.tools { flex: 1; display: flex; background: #fff; margin-right: 4px; }
.tb {
  display: flex;
  align-items: center;
  gap: 4px;
  padding-left: 10px;
  border-right: 3px solid #e0e3eb;
  white-space: nowrap;
}
.ico { width: 68px; height: 68px; fill: none; stroke: #131722; stroke-width: 1; }
.chev { width: 36px; height: 36px; fill: none; stroke: currentColor; stroke-width: 1; }
.w-symbol { width: 242px; padding-left: 20px; }
.w-symbol b { font-weight: 700; font-size: 31px; }
.w-small { width: 94px; justify-content: center; padding-left: 0; }
.w-confronta { width: 258px; }
.w-indicatori { width: 254px; }
.w-finanza { width: 224px; }
.w-modelli { width: 218px; }
.w-alert { width: 185px; }
.w-replay { width: 209px; }
.w-undo { width: 151px; gap: 0; padding-left: 4px; }
.w-icon { width: 93px; justify-content: center; padding-left: 3px; }
.w-icon.first { width: 96px; border-left: 3px solid #e0e3eb; }
.w-layout { width: 387px; padding-left: 13px; gap: 2px; }
.w-layout .chev { margin-left: auto; margin-right: 5px; }
.dim { opacity: .3; }
.publish { width: 213px; background: #3964f6; color: #fff; font-size: 34px; }

/* drawing tools */
.sidebar {
  display: flex;
  flex-direction: column;
  gap: 3px;
  width: 125px;
}
.group {
  display: flex;
  flex-direction: column;
  padding: 14px 0;
  background: #fff;
  border-radius: 0 6px 6px 0;
}
.group.rest { flex: 1; border-radius: 0 6px 0 24px; }
.tool { height: 86px; display: flex; justify-content: center; align-items: center; }
.tool svg { width: 68px; height: 68px; fill: none; stroke: #131722; stroke-width: 1; }
.tool.active svg { stroke: #3964f6; }

/* chart */
.main { min-width: 0; margin-right: 4px; display: flex; flex-direction: column; }
.chart { position: relative; border-bottom: 2px solid #e0e3eb; }
.plot { width: 100%; height: auto; font-family: "Open Sans", "Noto Sans", sans-serif; }
.grid { stroke: #060606; stroke-width: 2; }
.frame { stroke: #161616; stroke-width: 2; }
.marks { stroke: #3d63e6; stroke-width: 3; }
.last-price { stroke: #dd5e56; stroke-width: 2; stroke-dasharray: 2 4; }
.zero { stroke: #b9dcd4; stroke-width: 2; stroke-dasharray: 2 1; }
.dots { stroke-width: 5; stroke-dasharray: 5 10; }
.dots.red { stroke: #e05243; }
.dots.yellow { stroke: #fbe962; }
.trend { stroke: #69b05c; stroke-width: 5; stroke-dasharray: 26 29; fill: none; }
.arrow { fill: #6aae5c; stroke: #6aae5c; stroke-width: 5; stroke-linejoin: round; }
.notes { fill: #fff; font-size: 40px; font-weight: 600; }
.axis { fill: #fff; font-size: 30px; }
.axis.mid { text-anchor: middle; }
.axis .bold { font-weight: 700; }
.axis .dark { fill: #111; }
.cycles { fill: #3e552c; stroke: #4f9a78; stroke-width: 3; }
.line { fill: none; stroke-width: 3; stroke-linejoin: round; }
.line.white { stroke: #fff; }
.line.blue { stroke: #3964f6; }
.line.red { stroke: #e05243; }
.line.yellow { stroke: #fbe962; }
.line.orange { stroke: #ee7a35; }
.line.pen { stroke: #111; stroke-width: 4; stroke-linecap: round; }
.line.thin { stroke: #111; stroke-width: 2; }
.bars { fill: none; stroke-width: 2; }
.bars.up { stroke: #4fa69a; }
.bars.down { stroke: #e0605a; }

/* legend */
.legend {
  position: absolute;
  left: 18px;
  top: 11px;
  display: flex;
  flex-direction: column;
  align-items: flex-start;
  color: #fff;
  font-size: 30px;
  white-space: nowrap;
}
.title-row { display: flex; align-items: center; height: 56px; background: rgba(0, 0, 0, .5); }
.title { font-size: 37px; padding-left: 2px; width: 604px; }
.title i { font-style: normal; color: #666; }
.status {
  width: 43px;
  height: 43px;
  border-radius: 50%;
  border: 12px solid #0d2421;
  background: #459a8c;
}
.ohlc { display: flex; gap: 14px; margin-left: 38px; padding-top: 4px; }
.ohlc em { font-style: normal; color: #dd5e56; padding-left: 2px; }
.quote-row { display: flex; align-items: center; gap: 20px; height: 57px; margin: 10px 0; }
.quote { width: 163px; height: 57px; border: 3px solid; border-radius: 10px; background: #151722; }
.sell { color: #c6423b; }
.buy { color: #3964f6; }
.spread { font-size: 25px; color: #d1d4dc; }
.row { display: flex; align-items: center; gap: 15px; height: 57px; padding-left: 2px; }
.warn {
  width: 43px;
  height: 43px;
  margin-left: 20px;
  border-radius: 50%;
  background: #260f10;
  color: #dd4a40;
  font-weight: 700;
  display: flex;
  justify-content: center;
  align-items: center;
}
.y { color: #fbe962; }
.r { color: #e05243; }
.b { color: #3964f6; }
.collapse {
  width: 66px;
  height: 47px;
  margin: 7px 0 0 4px;
  border: 2px solid #363a45;
  border-radius: 7px;
  display: flex;
  justify-content: center;
  align-items: center;
}
.currency {
  position: absolute;
  right: 38px;
  top: 14px;
  width: 90px;
  height: 48px;
  border: 3px solid #363a45;
  border-radius: 10px;
  background: #000;
  color: #fff;
  font-size: 26px;
  display: flex;
  justify-content: center;
  align-items: center;
  gap: 3px;
}
.currency svg { width: 18px; height: 18px; fill: none; stroke: #fff; stroke-width: 2; }

/* range bar */
.ranges {
  display: flex;
  align-items: center;
  height: 90px;
  padding: 0 0 6px 21px;
  background: linear-gradient(#fff, #dcdcdc 42px);
  border-radius: 0 0 6px 6px;
  font-size: 29px;
  font-weight: 600;
}
.ranges button { width: 74px; padding-left: 16px; text-align: left; }
.ranges .wide { width: 94px; }
.ranges .all { width: 121px; }
.ranges .goto { width: 90px; height: 60px; padding-left: 36px; border-left: 2px solid #c4c6cc; }
.ranges .goto svg { width: 48px; height: 48px; fill: none; stroke: #131722; stroke-width: 2; }
.ranges .clock { width: 298px; height: 60px; padding: 0; border-right: 2px solid #c4c6cc; }
.ranges .pct { width: 92px; padding-left: 40px; font-weight: 400; }
.ranges .log { width: 80px; font-weight: 400; }
.ranges .auto { width: 106px; color: #3964f6; font-weight: 400; }
.tabs { flex: 1; margin-top: 10px; display: flex; background: #e2e2e2; border-radius: 6px 6px 0 0; }
.tabs span { width: 272px; border-right: 2px solid #c4c6cc; }
.tabs span:first-child { width: 324px; }

/* dock */
.dock {
  position: absolute;
  left: 165px;
  right: -40px;
  bottom: 9px;
  height: 146px;
  padding: 0 57px 0 3px;
  display: flex;
  background: #f0edf3;
  border: 2px solid #d3d0d6;
  border-radius: 34px;
  box-shadow: 0 0 24px rgba(0, 0, 0, .3);
}
.apps { flex: 1; display: grid; grid-template-columns: repeat(29, 1fr); }
.recent { display: flex; gap: 30px; }
.divider { width: 2px; height: 108px; margin: 18px 41px 0 30px; background: #b9b7bd; }
.app-icon {
  position: relative;
  display: flex;
  flex-direction: column;
  align-items: center;
  padding-top: 19px;
  text-decoration: none;
  color: inherit;
}
.app-icon > svg { width: 95px; height: 95px; overflow: visible; filter: drop-shadow(0 3px 2px rgba(0, 0, 0, .25)); }
.running::after { content: ""; width: 8px; height: 8px; margin-top: 17px; border-radius: 50%; background: #66646a; }
.cal {
  width: 95px;
  height: 95px;
  border-radius: 22px;
  overflow: hidden;
  background: #faf9f7;
  display: flex;
  flex-direction: column;
  text-align: center;
  box-shadow: 0 3px 3px rgba(0, 0, 0, .25);
  font-family: Inter, sans-serif;
}
.cal-m { height: 29px; background: #e0605a; color: #fff; font-size: 20px; line-height: 31px; font-weight: 600; }
.cal-d { font-size: 56px; line-height: 62px; font-weight: 300; }
.tv {
  width: 95px;
  height: 95px;
  border-radius: 22px;
  background: linear-gradient(#2c3633, #0c1012);
  color: #fff;
  font: 500 42px/1 Inter, sans-serif;
  display: flex;
  justify-content: center;
  align-items: center;
  gap: 2px;
}
.tv svg { width: 28px; height: 34px; }
.tip {
  position: absolute;
  top: -80px;
  left: 50%;
  width: 184px;
  margin-left: -92px;
  border-radius: 10px;
  background: #b6b3b9;
  color: #111;
  font: 25px/48px Inter, sans-serif;
  text-align: center;
}
.tip::after {
  content: "";
  position: absolute;
  left: 78px;
  top: 48px;
  border: 14px solid transparent;
  border-top: 16px solid #b6b3b9;
}
```
FILE: chart.js
```js
// Each series is a list of tiles: [originX, originY, stepX, stepY, "x,y x,y ..."],
// a "/" inside the data starts a new stroke.
const A = [140, 900, 0.7653, 0.3954];
const B = [1300, 900, 0.7653, 0.3333];
const C = [2400, 500, 0.7653, 0.3508];
const D = [3300, 200, 0.7462, 0.3508];
const E = [140, 1480, 0.9566, 0.5421];
const F = [0, 0, 2.851, 2.851];
const G = [3300, 1440, 0.7462, 0.6122];

function decode(tiles) {
  const strokes = [[]];
  for (const [t, data] of tiles) {
    for (const item of data.trim().split(/\s+/)) {
      if (item === "/") { strokes.push([]); continue; }
      const [x, y] = item.split(",").map(Number);
      strokes[strokes.length - 1].push([t[0] + x * t[2], t[1] + y * t[3]]);
    }
  }
  return strokes.filter(s => s.length);
}

function smooth(p) {
  let d = "M" + p[0].map(v => v.toFixed(1));
  for (let i = 0; i < p.length - 1; i++) {
    const a = p[i - 1] || p[i], b = p[i], c = p[i + 1], e = p[i + 2] || c;
    const k = 8;
    d += "C" + [b[0] + (c[0] - a[0]) / k, b[1] + (c[1] - a[1]) / k,
      c[0] - (e[0] - b[0]) / k, c[1] - (e[1] - b[1]) / k, c[0], c[1]].map(v => v.toFixed(1));
  }
  return d;
}

function add(parent, cls, d) {
  const el = document.createElementNS("http://www.w3.org/2000/svg", "path");
  el.setAttribute("class", cls);
  el.setAttribute("d", d);
  document.getElementById(parent).appendChild(el);
}

function line(parent, color, tiles) {
  add(parent, "line " + color, decode(tiles).map(smooth).join(""));
}

// cycle arcs
let arcs = "";
for (let i = 0; i < 12; i++) {
  const x = -72 + i * 363.3;
  arcs += `M${x} 2275A181.7 182 0 0 1 ${x + 363.3} 2275`;
}
add("cycles", "", arcs);

// price bars
const bars = decode([
 [A, "10,490 20,440 32,310 45,325 60,350 70,330 83,450 92,380 105,360 112,390 118,280 128,230 137,215 145,270 155,265 165,310 175,345 185,230 196,185 203,280 213,370 223,265 235,320 245,300 258,330 268,310 280,360 290,480 298,470 305,470 315,510 322,480 330,610 338,560 345,520 / 347,380 352,290 370,260 382,215 392,260 405,250 420,330 432,225 442,270 455,320 466,350 / 469,155 475,215 487,180 498,210 503,300 510,430 520,460 535,470 548,350 560,320 570,430 585,580 590,540 / 592,960 598,1110 601,1080 606,1200 613,1230 625,1170 636,1200 645,1270 650,1240 658,1330 668,1390 680,1340 688,1260 696,1310 703,1270 711,1260 / 714,1130 722,1060 734,950 748,1060 758,960 770,970 780,930 795,950 805,980 813,920 822,950 828,1050 834,1020 / 837,780 842,740 850,830 858,880 866,820 873,860 882,800 893,820 905,760 922,690 930,740 938,650 945,660 956,640 / 958,400 962,440 972,370 985,320 1003,260 1010,340 1020,330 1032,360 1045,330 1056,240 1078,225 / 1082,280 1098,360 1110,260 1125,310 1145,300 1157,345 1172,310 1182,250 1200,310 / 1203,130 1212,190 1222,260 1233,200 1245,185 1258,250 1272,240 1282,290 1290,270 1300,260 1313,170 1325,130 1328,90 1332,240 1345,350 1357,340 1373,500 1380,460 1388,490 1400,360 1410,450 1420,430 1427,600 1434,700 1438,620 1445,700 1455,570 1462,550 1468,600 1480,520 1495,510 1505,540 1520,590 1530,550 1540,640 1546,740 1555,620 1565,560 /"],
 [B, "56,500 66,460 75,590 87,550 95,620 105,710 115,720 125,700 138,700 150,850 160,780 168,800 177,680 / 180,1220 182,1100 187,950 191,1020 198,1140 208,930 220,1040 235,930 245,760 255,710 262,800 272,730 285,930 298,830 310,1060 318,920 326,1060 333,920 345,830 358,800 370,890 385,800 402,740 411,1020 420,990 428,830 435,890 445,800 458,670 465,640 475,660 488,610 500,640 520,700 528,540 543,460 / 546,660 550,820 556,980 562,1050 570,960 578,1100 583,1170 593,1100 601,1150 612,1070 625,890 632,900 640,810 646,920 655,800 662,780 666,820 / 669,430 676,590 682,540 688,600 700,550 715,470 732,410 740,430 752,400 763,440 777,330 792,340 800,370 815,370 825,420 840,300 850,315 862,280 870,330 880,275 890,290 900,310 910,280 / 914,350 925,430 935,480 945,440 958,430 968,570 975,510 988,590 1005,560 1015,490 1033,510 / 1036,840 1042,720 1047,660 1053,680 1060,610 1070,490 1080,490 1092,440 1105,500 1118,440 1125,460 1135,400 1148,450 1155,420 1161,510 1170,430 1185,370 1205,370 1220,400 1238,340 1252,340 1263,450 1277,380 / 1282,220 1290,250 1298,160 1308,100 1328,125 1345,105 1358,40 1368,30 1380,20 1395,10 /"],
 [C, "-32,950 -15,960 0,980 12,985 23,1060 35,1020 47,930 58,910 66,870 75,940 87,920 / 89,1060 94,1130 105,1090 120,1110 135,1190 152,1150 165,1220 183,1270 188,1210 196,1260 210,1150 222,1160 230,1120 240,1130 255,1090 266,1060 280,1085 292,1100 300,1155 318,1100 330,1040 / 333,1150 337,970 343,930 350,1040 360,990 373,990 395,940 405,980 420,1010 435,930 445,790 454,800 / 458,1010 467,890 478,900 485,880 490,900 502,870 515,900 530,860 545,850 552,790 565,770 575,830 585,710 595,800 606,710 615,730 625,770 635,730 648,700 660,760 682,720 700,800 708,680 715,740 727,650 735,680 743,640 750,560 765,600 785,600 797,640 810,600 820,560 825,470 833,310 843,290 855,400 863,430 872,370 885,375 898,370 902,330 910,370 925,350 935,330 944,330 / 947,430 960,420 975,490 982,530 995,440 1002,530 1010,490 1022,520 1040,560 1047,480 1058,580 1072,440 1087,570 1097,490 1110,420 1130,400 1145,410 1160,490 1175,470 1188,450 / 1192,690 1194,540 1205,570 1212,540 1225,590 1235,600 1241,730 1248,580 1265,580 1275,570 1282,640 1292,540 1300,510 1312,450 /"],
 [D, "142,1080 146,960 154,840 163,870 168,860 180,930 190,980 205,1060 220,1010 230,1000 240,990 247,930 257,980 270,910 280,980 292,1030 308,930 325,1000 340,980 355,960 362,990 380,930 390,970 400,900 412,920 425,870 435,820 442,830 452,770 462,810 480,830 495,770 503,800 513,755 / 518,590 522,530 532,600 540,590 548,620 565,575 580,610 588,670 597,620 603,670 613,620 628,660 635,600 641,590 / 645,490 652,510 660,470 670,400 680,410 688,350 700,280 710,190 720,190 732,190 740,260 755,260 768,240 775,220 785,280 795,300 808,240 820,270 835,290 850,290 868,240 880,270 892,300 / 897,390 908,380 920,340 935,380 945,360 958,380 975,440 990,420 1000,590 1010,560 1020,590 1028,480 1040,600 1055,590 1065,570 1080,640 1103,655 1115,600 1125,520 1135,480 1147,580 1152,490 1160,530 1170,480 1185,550 1205,560 1215,480 1233,460 1243,500 1255,450 1270,410 1274,380 1280,460 1286,410 1293,480"]
]);
let seed = 7;
const rnd = () => (seed = (seed * 16807) % 2147483647) / 2147483647;
let up = "", down = "";
for (const s of bars) {
  let i = 0, prev = s[0][1];
  for (let x = s[0][0]; x <= s[s.length - 1][0]; x += 2) {
    while (i < s.length - 2 && s[i + 1][0] < x) i++;
    const [a, b] = [s[i], s[i + 1]];
    const y = a[1] + (b[1] - a[1]) * Math.min(1, (x - a[0]) / (b[0] - a[0])) + (rnd() - 0.5) * 13;
    const top = Math.min(y, prev) - rnd() * rnd() * rnd() * 32;
    const bottom = Math.max(y, prev) + rnd() * rnd() * rnd() * 32;
    const d = `M${x.toFixed(1)} ${top.toFixed(1)}V${bottom.toFixed(1)}`;
    if (y < prev) up += d; else down += d;
    prev = y;
  }
}
add("prices", "bars up", up);
add("prices", "bars down", down);

// moving averages
line("prices", "white", [
 [A, "8,315 60,331 115,355 185,374 240,386 280,392 325,391 350,400 405,391 460,370 508,351 560,355 585,360 610,385 655,427 720,514 790,577 835,626 880,661 925,693 962,707 990,704 1018,691 1060,694 1140,696 1176,702 1215,690 1240,687 1264,675 1300,627 1345,558 1385,501 1425,468 1470,449 1510,422 1568,402"],
 [B, "65,468 95,457 118,455 145,465 178,487 240,548 285,575 345,627 395,667 440,709 490,740 525,752 547,750 590,780 625,798 670,809 720,795 770,785 815,763 850,740 915,670 950,653 1025,609 1080,592 1120,566 1165,551 1222,534 1285,470 1335,410 1400,363"],
 [C, "0,1457 45,1423 88,1389 150,1363 200,1340 260,1294 300,1253 340,1223 430,1149 515,1068 580,1024 640,989 700,966 755,944 800,912 825,890 870,833 940,750 1000,692 1060,650 1130,606 1195,564 1240,546 1290,535 1320,524 1370,480 1440,423 1500,376 1568,346"],
 [D, "440,1187 515,1130 570,1067 640,994 690,933 720,880 770,794 828,700 860,671 935,595 995,549 1060,508 1105,490 1200,450 1245,441 1295,430"]
]);
line("prices", "blue", [
 [A, "8,445 70,440 110,417 140,392 200,370 240,362 280,355 320,349 350,354 380,345 415,338 450,322 475,327 508,321 540,340 575,348 600,372 640,470 670,545 700,640 730,710 780,808 820,890 835,930 870,972 900,1010 925,1027 960,975 985,905 1015,805 1060,690 1100,605 1175,470 1245,345 1300,288 1335,269 1375,273 1425,300 1475,342 1530,380"],
 [B, "53,510 100,553 140,600 178,652 245,746 280,747 345,804 395,818 430,855 465,863 515,846 547,797 580,800 618,842 655,836 690,805 745,748 795,680 835,650 883,605 925,520 965,445 1000,417 1032,410 1070,426 1110,434 1165,450 1215,462 1275,469 1300,456 1370,360 1400,305"],
 [C, "0,1365 45,1280 88,1208 150,1141 180,1113 240,1095 295,1080 335,1094 380,1090 430,1097 495,1046 550,990 620,918 660,872 700,840 740,808 770,773 822,733 870,660 945,563 1000,522 1050,484 1110,465 1155,437 1190,444 1240,478 1300,516 1325,510 1355,465 1400,415 1450,352 1485,323 1530,280 1568,220"],
 [D, "440,1010 488,932 515,925 575,855 640,793 690,712 770,550 820,470 865,408 925,357 990,317 1040,336 1110,415 1165,457 1220,494 1250,506 1295,515"]
]);
line("prices", "red", [
 [A, "8,432 25,437 60,430 115,420 145,367 200,305 240,304 275,290 300,310 340,370 365,387 400,380 435,371 470,350 510,268 540,290 565,305 590,345 620,500 645,640 672,820 700,970 740,1130 760,1187 785,1153 830,1080 850,1015 885,930 930,865 962,800 1005,635 1050,500 1085,400 1125,322 1160,303 1185,307 1215,290 1250,280 1275,268 1300,265 1335,233 1365,246 1390,280 1430,340 1475,435 1510,503 1550,542"],
 [B, "55,668 78,672 105,648 145,657 180,690 215,753 245,820 275,843 300,863 345,920 405,850 440,883 455,878 505,777 530,750 548,715 580,750 620,805 665,860 685,846 715,848 740,765 790,560 835,435 880,368 925,338 960,352 1030,425 1085,522 1130,530 1200,482 1230,430 1275,408 1300,378 1370,245 1405,160"],
 [C, "0,1195 20,1137 45,1090 88,1017 132,1005 180,1073 225,1122 255,1160 290,1160 330,1145 370,1088 430,1027 470,968 500,935 540,910 605,840 625,833 680,780 740,738 765,707 822,665 860,573 905,475 965,402 995,388 1050,437 1110,493 1190,482 1235,490 1275,515 1310,542 1330,500 1395,350 1435,225 1480,117 1525,132 1568,110"],
 [D, "440,945 480,900 515,865 560,765 600,702 640,668 710,530 740,455 800,325 830,275 872,257 910,280 950,300 985,330 1035,405 1100,510 1125,547 1165,563 1215,562 1250,538 1295,486"]
]);
line("prices", "yellow", [
 [A, "8,488 25,493 40,465 65,392 120,352 160,310 180,292 200,256 235,290 265,292 290,335 325,400 348,466 370,450 395,375 430,262 445,260 468,280 490,258 505,253 540,315 565,335 590,440 600,550 625,740 650,1000 665,1150 678,1245 700,1275 712,1290 735,1230 760,1120 795,990 810,968 835,967 850,935 880,892 920,795 932,790 960,720 985,590 1020,410 1050,325 1080,295 1100,300 1135,284 1165,315 1200,302 1230,275 1255,233 1285,228 1302,240 1330,223 1360,262 1385,330 1430,450 1450,512 1480,545 1508,577 1535,548"],
 [B, "53,684 78,660 120,625 138,632 150,680 178,735 200,850 235,940 260,942 285,870 300,850 320,850 345,900 380,900 405,845 440,860 490,780 510,700 545,607 570,700 600,870 622,1000 633,1033 660,980 690,810 720,640 750,490 800,390 835,375 870,347 895,335 917,298 960,365 985,440 1010,500 1033,515 1062,575 1095,548 1117,545 1145,460 1175,450 1205,412 1230,400 1255,378 1278,388 1295,355 1340,220 1365,125 1385,80 1400,50"],
 [C, "0,1083 20,1040 50,990 88,963 100,980 125,1000 145,1070 170,1150 205,1207 240,1190 290,1110 325,1105 375,1050 410,978 435,975 455,933 480,922 515,880 540,892 580,845 620,778 665,745 705,745 740,730 790,632 822,605 850,520 910,370 930,370 948,362 970,372 1010,440 1045,503 1100,524 1155,460 1188,443 1220,500 1250,560 1290,597 1312,578 1340,370 1370,200 1398,112 1428,143 1485,113 1530,127 1568,105"],
 [D, "430,925 460,870 515,800 570,660 603,608 635,627 660,595 700,470 740,310 785,235 815,260 860,280 890,278 910,303 945,325 990,388 1035,480 1080,570 1120,607 1165,568 1200,520 1250,502 1295,455"]
]);

// oscillator
line("osc", "orange", [
 [E, "8,902 18,885 32,835 45,808 58,792 70,800 90,793 112,733 125,720 142,731 160,701 175,726 200,740 222,756 240,808 260,850 270,885 276,893 290,828 308,762 330,727 338,731 353,712 373,733 398,689 407,705 420,755 435,798 452,788 460,810 472,862 480,975 490,1120 500,1220 515,1315 530,1385 540,1428 550,1434 562,1426 571,1410 582,1340 592,1270 608,1195 630,1110 658,1044 668,1045 680,980 700,930 722,875 740,825 765,755 780,655 795,570 808,520 820,500 840,491 865,454 882,486 895,483 918,512 938,540 952,537 962,545 972,526 985,528 1003,519 1040,570 1050,568 1064,548 1080,595 1092,640 1112,728 1122,730 1138,750 1150,810 1160,860 1178,875 1205,855 1228,863 1245,892 1257,883 1270,828 1285,815 1305,838 1325,855 1347,890 1354,883 1360,925 1372,985 1383,995 1396,1014 1405,1000 1418,945 1436,907 1455,915 1465,937 1477,951 1500,905 1515,893 1536,853 1550,888"],
 [F, "575,684 584,672 592,662 603,647 607,665 612,683 618,697 622,699 628,688 634,672 642,658 650,636 660,627 672,622 680,620 690,619 700,620 706,632 715,640 722,643 730,655 740,668 748,664 760,660 770,657 780,657 792,650 800,647 808,640 818,622 828,612 838,604 846,600 855,603 862,600 868,612 878,627 888,642 897,649 908,646 920,644 930,642 937,638 945,636 952,635 962,632 966,628 975,628 985,630 1000,627 1015,625 1030,624 1045,622 1055,620 1062,613 1070,605 1080,603 1090,604 1100,605 1110,612 1120,623 1135,630 1145,629"],
 [G, "0,639 13,639 30,672 60,707 72,733 98,736 112,746 140,717 160,590 175,525 192,505 220,516 240,514 272,499 298,523 315,522 345,547 370,554 425,551 460,520 517,522 540,470 570,453 600,470 637,496 665,465 690,430 715,375 735,350 772,367 800,400 820,408 860,455 890,480 915,520 960,575 992,620 1020,686 1035,692 1060,730 1090,765 1110,779 1120,775 1145,745 1180,730 1210,734 1240,712 1285,688 1295,691"]
]);

// pen strokes on the white note
line("ink", "thin", [[E, "166,115 167,452"]]);
line("ink", "pen", [
 [E, "709,446 708,455 / 206,242 205,205 214,98 225,175 233,242 / 202,200 226,180 / 242,192 255,186 244,240 258,238 / 262,192 274,186 264,238 280,236 / 282,218 296,200 290,190 282,225 296,234 / 312,195 303,225 318,232 / 332,188 322,225 338,228 / 352,180 342,182 338,215 354,205 354,180 356,225 367,243 / 417,90 398,140 384,220 390,236 403,225 405,182 / 399,180 422,178 / 430,180 421,190 424,225 436,190 436,225 / 440,220 440,165 452,160 / 455,95 452,160 456,235 / 458,185 470,200 466,232 456,235 / 472,185 474,215 482,200 / 492,175 484,195 490,230 500,180 490,245 488,262 508,300 510,290 495,235 / 518,228 505,150 504,75 510,52 517,90 518,228 / 525,195 526,218 / 526,150 526,154 / 347,410 308,335 312,310 330,298 350,310 348,355 340,365 / 366,368 356,380 354,410 366,395 370,412 / 374,430 360,380 357,290 362,270 367,290 372,360 374,415 / 379,352 382,410 / 395,348 388,375 400,410 406,380 395,348 / 323,420 345,418 350,425 / 354,445 390,412 / 372,455 392,440"]
]);
```
